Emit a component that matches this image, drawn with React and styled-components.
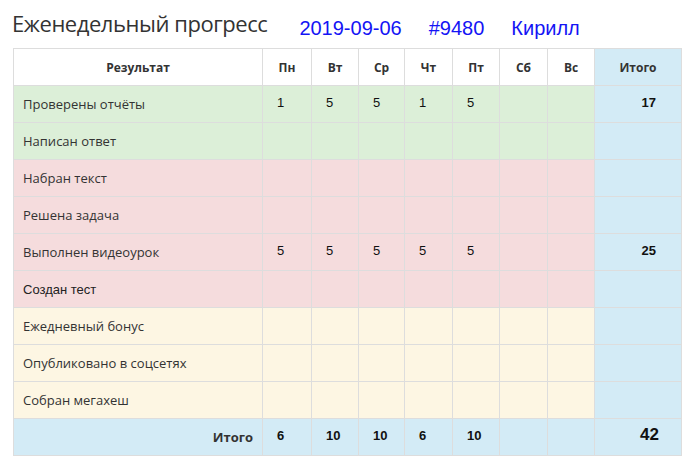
import styled, { createGlobalStyle } from "styled-components";

const GlobalStyle = createGlobalStyle`
  body {
    margin: 0;
    background: #fff;
    font-family: "Open Sans", "Liberation Sans", sans-serif;
  }
`;

const tones = {
  success: "#dcefd8",
  danger: "#f5dcdd",
  warning: "#fdf6e3",
  info: "#d3ebf6",
};

const Page = styled.div`
  padding: 0 9px 10px 13px;
  width: 668px;
`;

const TitleBar = styled.div`
  display: flex;
  align-items: flex-start;
  height: 48px;
`;

const Title = styled.h1`
  margin: 10px 32px 0 -1px;
  font-size: 22px;
  line-height: 26px;
  font-weight: 400;
  letter-spacing: -0.45px;
  color: #333;
`;

const Meta = styled.a`
  margin: 16px 27px 0 0;
  font-family: "Liberation Sans", Arial, sans-serif;
  font-size: 20px;
  line-height: 24px;
  color: #1414f5;
  text-decoration: none;
`;

const Table = styled.table`
  width: 668px;
  border-collapse: collapse;
  table-layout: fixed;
  font-size: 13px;
  color: #333;
`;

const Head = styled.th`
  height: 36px;
  padding: 0;
  border: 1px solid #ddd;
  background: ${(p) => (p.$tone ? tones[p.$tone] : "#fff")};
  font-size: 12px;
  font-weight: 700;
  color: #333;
  text-align: center;
  vertical-align: middle;
`;

const Row = styled.tr`
  height: 37px;
  background: ${(p) => tones[p.$tone]};
`;

const Label = styled.td`
  padding: 0 9px;
  border: 1px solid #ddd;
  vertical-align: middle;
  font-family: ${(p) =>
    p.$plain ? '"Liberation Sans", Arial, sans-serif' : '"Open Sans", sans-serif'};
  color: ${(p) => (p.$plain ? "#222" : "#333")};
  text-align: ${(p) => (p.$right ? "right" : "left")};
  font-weight: ${(p) => (p.$right ? 700 : 400)};
`;

const Num = styled.td`
  padding: 0 0 4px 14px;
  border: 1px solid #ddd;
  vertical-align: middle;
  font-family: "Liberation Sans", Arial, sans-serif;
  font-size: 13px;
  font-weight: ${(p) => (p.$bold ? 700 : 400)};
  color: #111;
`;

const Total = styled.td`
  padding: 0 ${(p) => (p.$big ? 22 : 25)}px 4px 0;
  border: 1px solid #ddd;
  background: ${tones.info};
  vertical-align: middle;
  text-align: right;
  font-family: "Liberation Sans", Arial, sans-serif;
  font-size: ${(p) => (p.$big ? 17 : 13)}px;
  font-weight: 700;
  color: #111;
`;

const days = ["Пн", "Вт", "Ср", "Чт", "Пт", "Сб", "Вс"];
const widths = [49, 47, 46, 48, 47, 48, 47];

const rows = [
  { label: "Проверены отчёты", tone: "success", values: [1, 5, 5, 1, 5], total: 17 },
  { label: "Написан ответ", tone: "success", values: [] },
  { label: "Набран текст", tone: "danger", values: [] },
  { label: "Решена задача", tone: "danger", values: [] },
  { label: "Выполнен видеоурок", tone: "danger", values: [5, 5, 5, 5, 5], total: 25 },
  { label: "Создан тест", tone: "danger", values: [], plain: true },
  { label: "Ежедневный бонус", tone: "warning", values: [] },
  { label: "Опубликовано в соцсетях", tone: "warning", values: [] },
  { label: "Собран мегахеш", tone: "warning", values: [] },
];

const sums = [6, 10, 10, 6, 10];

export default function App() {
  return (
    <Page>
      <GlobalStyle />
      <TitleBar>
        <Title>Еженедельный прогресс</Title>
        <Meta href="#">2019-09-06</Meta>
        <Meta href="#">#9480</Meta>
        <Meta href="#">Кирилл</Meta>
      </TitleBar>
      <Table>
        <colgroup>
          <col style={{ width: 249 }} />
          {widths.map((w, i) => (
            <col key={i} style={{ width: w }} />
          ))}
          <col style={{ width: 87 }} />
        </colgroup>
        <thead>
          <tr>
            <Head>Результат</Head>
            {days.map((d) => (
              <Head key={d}>{d}</Head>
            ))}
            <Head $tone="info">Итого</Head>
          </tr>
        </thead>
        <tbody>
          {rows.map((r) => (
            <Row key={r.label} $tone={r.tone}>
              <Label $plain={r.plain}>{r.label}</Label>
              {days.map((d, i) => (
                <Num key={d}>{r.values[i]}</Num>
              ))}
              <Total>{r.total}</Total>
            </Row>
          ))}
          <Row $tone="info">
            <Label $right>Итого</Label>
            {days.map((d, i) => (
              <Num key={d} $bold>
                {sums[i]}
              </Num>
            ))}
            <Total $big>42</Total>
          </Row>
        </tbody>
      </Table>
    </Page>
  );
}
